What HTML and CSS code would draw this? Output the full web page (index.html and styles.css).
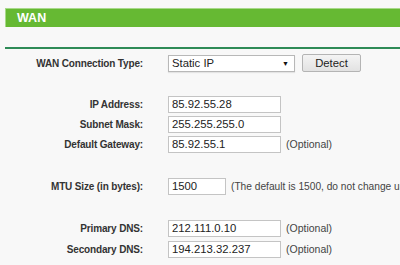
FILE: index.html
```html
<!DOCTYPE html>
<html lang="en">
<head>
    <meta charset="UTF-8">
    <title>WAN</title>
    <link rel="stylesheet" href="styles.css">
</head>
<body>
    <div class="page">
        <div class="title-bar">WAN</div>
        <div class="divider"></div>

        <div class="form">
            <div class="row">
                <label>WAN Connection Type:</label>
                <div class="field">
                    <div class="select">Static IP<span class="arrow">&#9660;</span></div>
                    <button class="btn">Detect</button>
                </div>
            </div>

            <div class="row gap-a">
                <label>IP Address:</label>
                <div class="field"><input class="ip" type="text" value="85.92.55.28"></div>
            </div>
            <div class="row">
                <label>Subnet Mask:</label>
                <div class="field"><input class="ip" type="text" value="255.255.255.0"></div>
            </div>
            <div class="row">
                <label>Default Gateway:</label>
                <div class="field"><input class="ip" type="text" value="85.92.55.1"><span class="hint">(Optional)</span></div>
            </div>

            <div class="row gap-b">
                <label>MTU Size (in bytes):</label>
                <div class="field"><input class="mtu" type="text" value="1500"><span class="hint long">(The default is 1500, do not change unless necessary.)</span></div>
            </div>

            <div class="row gap-b">
                <label>Primary DNS:</label>
                <div class="field"><input class="ip" type="text" value="212.111.0.10"><span class="hint">(Optional)</span></div>
            </div>
            <div class="row tall">
                <label>Secondary DNS:</label>
                <div class="field"><input class="ip" type="text" value="194.213.32.237"><span class="hint">(Optional)</span></div>
            </div>
        </div>
    </div>
</body>
</html>
```

FILE: styles.css
```css
* {
    margin: 0;
    padding: 0;
    box-sizing: border-box;
}

html, body {
    background: #f8f8f8;
    overflow: hidden;
}

body {
    font-family: "Liberation Sans", Arial, sans-serif;
    color: #333;
    font-size: 11px;
    padding: 8px 0 0 5px;
    width: 400px;
}

.page {
    width: 395px;
    overflow: hidden;
}

.title-bar {
    height: 19px;
    background: #66b933;
    border-top: 1px solid #a8d98a;
    border-left: 1px solid #a8d98a;
    color: #fff;
    font-weight: bold;
    font-size: 12.5px;
    line-height: 18px;
    padding-left: 11px;
}

.divider {
    height: 2px;
    margin-top: 20px;
    background: #2e8b57;
}

.form {
    padding-top: 4px;
}

.row {
    display: flex;
    align-items: center;
    height: 20px;
}

.row.gap-a {
    margin-top: 21px;
}

.row.gap-b {
    margin-top: 22px;
}

.row.tall {
    margin-top: 1px;
}

.row label {
    flex-shrink: 0;
    width: 138px;
    text-align: right;
    font-weight: bold;
    font-size: 10px;
    letter-spacing: -0.15px;
    color: #333;
    white-space: nowrap;
}

.field {
    display: flex;
    align-items: center;
    margin-left: 25px;
    white-space: nowrap;
}

input {
    flex-shrink: 0;
    font-family: "Liberation Sans", Arial, sans-serif;
    font-size: 11.3px;
    color: #222;
    background: #fff;
    border: 1px solid #c4c4c4;
    height: 17px;
    padding: 0 3px;
    outline: none;
}

input.ip {
    width: 113px;
}

input.mtu {
    width: 58px;
}

.hint {
    margin-left: 5px;
    font-size: 10.5px;
    color: #444;
}

.hint.long {
    font-size: 10.2px;
}

.select {
    flex-shrink: 0;
    position: relative;
    width: 127px;
    height: 17px;
    background: #fff;
    border: 1px solid #b8b8b8;
    box-shadow: 0 1px 1px rgba(0, 0, 0, 0.08);
    font-size: 11.3px;
    color: #222;
    line-height: 15px;
    padding-left: 3px;
}

.arrow {
    position: absolute;
    right: 5px;
    top: 0;
    font-size: 7px;
    color: #111;
}

.btn {
    flex-shrink: 0;
    margin-left: 7px;
    width: 59px;
    height: 18px;
    font-family: "Liberation Sans", Arial, sans-serif;
    font-size: 11.3px;
    color: #222;
    background: linear-gradient(#f4f4f4, #e2e2e2);
    border: 1px solid #b4b4b4;
    border-radius: 2px;
}
```
